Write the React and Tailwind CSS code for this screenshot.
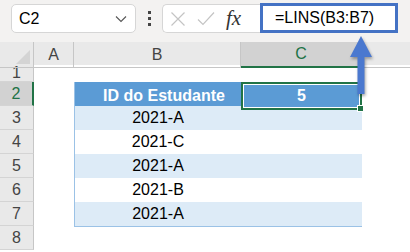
import React from 'react'

const rows = [
  { n: 3, v: '2021-A', fill: 'bg-[#ddebf7]' },
  { n: 4, v: '2021-C', fill: 'bg-white' },
  { n: 5, v: '2021-A', fill: 'bg-[#ddebf7]' },
  { n: 6, v: '2021-B', fill: 'bg-white' },
  { n: 7, v: '2021-A', fill: 'bg-[#ddebf7]' },
]

const cols = 'grid grid-cols-[34px_40px_167px_121px_1fr]'

function RowHead({ children, active, h = 'h-6' }) {
  return (
    <div
      className={`${h} flex items-center justify-center border-b border-[#d4d4d4] ${
        active
          ? 'bg-[#d2d2d2] text-[#217346] border-r-2 border-r-[#217346]'
          : 'bg-[#e9e9e9] text-[#444] border-r border-r-[#c6c6c6]'
      }`}
    >
      {children}
    </div>
  )
}

export default function App() {
  return (
    <div
      className="relative w-[410px] h-[252px] overflow-hidden bg-white text-[16px] text-black"
      style={{ fontFamily: '"Liberation Sans", Arial, sans-serif' }}
    >
      {/* formula bar */}
      <div className="h-[42px] bg-[#f3f2f1] flex items-start pt-1 pl-[11px] gap-0">
        <div className="h-[29px] w-[125px] rounded-[5px] border border-[#d6d6d6] bg-white flex items-center pl-[7px] pr-2">
          <span className="flex-1 text-[16px]">C2</span>
          <svg width="12" height="8" viewBox="0 0 12 8" className="text-[#555]">
            <path d="M1 1.5l5 5 5-5" fill="none" stroke="currentColor" strokeWidth="1.1" />
          </svg>
        </div>
        <div className="ml-[12px] mt-[7px] flex flex-col gap-[3px]">
          <span className="block h-[3px] w-[3px] bg-[#444]" />
          <span className="block h-[3px] w-[3px] bg-[#444]" />
          <span className="block h-[3px] w-[3px] bg-[#444]" />
        </div>
        <div className="ml-[11px] h-[29px] w-[98px] rounded-l-[5px] border border-r-0 border-[#d6d6d6] bg-white flex items-center pl-[7px] gap-[11px]">
          <svg width="16" height="16" viewBox="0 0 16 16">
            <path d="M1.5 1.5l13 13M14.5 1.5l-13 13" stroke="#c4c4c4" strokeWidth="1.2" />
          </svg>
          <svg width="18" height="16" viewBox="0 0 18 16">
            <path d="M1 8.5l5 5L17 1.5" fill="none" stroke="#c4c4c4" strokeWidth="1.2" />
          </svg>
          <span
            className="italic text-[21px] text-[#333] leading-none"
            style={{ fontFamily: '"Liberation Serif", "Times New Roman", serif' }}
          >
            fx
          </span>
        </div>
        <div className="h-[30px] -mt-[1px] w-[138px] border-[3px] border-[#4472c4] bg-white flex items-center pl-[12px] text-[16px]">
          =LINS(B3:B7)
        </div>
      </div>

      {/* column headers */}
      <div className={`${cols} h-[23px] bg-[#e9e9e9] text-[#444] text-[16px]`}>
        <div className="relative border-r border-[#c6c6c6] border-b border-b-[#c6c6c6]">
          <svg width="14" height="14" viewBox="0 0 14 14" className="absolute right-[3px] bottom-[3px]">
            <path d="M14 0V14H0Z" fill="#d4d4d4" />
          </svg>
        </div>
        <div className="flex items-center justify-center border-r border-[#c6c6c6] border-b border-b-[#c6c6c6]">A</div>
        <div className="flex items-center justify-center border-r border-[#c6c6c6] border-b border-b-[#c6c6c6]">B</div>
        <div className="flex items-center justify-center bg-[#d2d2d2] text-[#217346] border-r border-[#c6c6c6] border-b-2 border-b-[#217346]">C</div>
        <div className="border-b border-[#c6c6c6]" />
      </div>

      {/* row 1 */}
      <div className={`${cols} h-[17px]`}>
        <RowHead h="h-[17px]">1</RowHead>
        <div />
        <div />
        <div />
        <div />
      </div>

      {/* row 2 - table header */}
      <div className={`${cols} h-6`}>
        <RowHead active>2</RowHead>
        <div />
        <div className="bg-[#5b9bd5] text-white font-bold flex items-center justify-center pl-3 border-l border-[#9bc2e6]">
          ID do Estudante
        </div>
        <div className="relative bg-[#5b9bd5] text-white font-bold flex items-center justify-center border-2 border-[#217346]">
          <div className="absolute inset-0 border border-white" />
          5
          <span className="absolute -right-[4px] -bottom-[4px] h-[5px] w-[5px] bg-[#217346] border border-white box-content" />
        </div>
        <div />
      </div>

      {rows.map((r) => (
        <div key={r.n} className={`${cols} h-6`}>
          <RowHead>{r.n}</RowHead>
          <div />
          <div className={`${r.fill} flex items-center justify-center border-l border-[#9bc2e6] border-b border-b-[#9bc2e6]`}>
            {r.v}
          </div>
          <div className={`${r.fill} border-b border-[#9bc2e6]`} />
          <div />
        </div>
      ))}

      <div className={`${cols} h-6`}>
        <RowHead>8</RowHead>
        <div />
        <div />
        <div />
        <div />
      </div>

      {/* callout arrow */}
      <svg
        width="30"
        height="64"
        viewBox="0 0 30 64"
        className="absolute left-[346px] top-[34px]"
        style={{ filter: 'drop-shadow(1px 2px 1.5px rgba(0,0,0,0.35))' }}
      >
        <path d="M15 2L26 23H18.5V60H11.5V23H4Z" fill="#4a78cf" />
      </svg>
    </div>
  )
}
